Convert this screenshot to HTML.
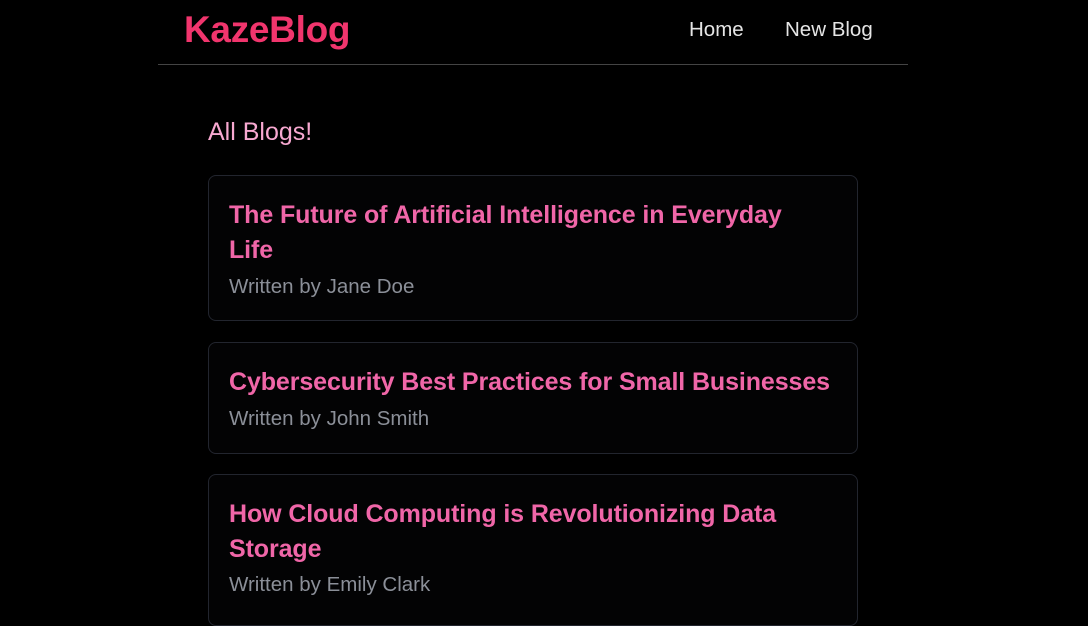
<!DOCTYPE html>
<html><head><style>
body{margin:0;background:#000;font-family:"Liberation Sans",sans-serif;width:1088px;height:605px;overflow:hidden;position:relative}
.hdr{position:absolute;left:158px;top:0;width:750px;height:64px;border-bottom:1px solid #444}
.logo{position:absolute;left:26px;top:9px;font-size:37px;color:#f1356d;font-weight:bold;letter-spacing:-0.3px}
.nav{position:absolute;top:18px;font-size:20.5px;color:#e5e5e5}
h2{position:absolute;left:208px;top:118px;margin:0;font-size:25px;font-weight:normal;color:#f7a8d0}
.card{position:absolute;left:208px;width:608px;padding:0 20px;border:1px solid #22252e;border-radius:8px;background:#030304}
.t{font-size:25px;font-weight:bold;color:#f066a8;line-height:35px;letter-spacing:-0.1px;white-space:nowrap}
.a{font-size:20.5px;color:#8b8f98;line-height:28px;margin-top:5px}
</style></head><body>
<div class="hdr"><div class="logo">KazeBlog</div>
<div class="nav" style="left:531px">Home</div>
<div class="nav" style="left:627px">New Blog</div></div>
<h2>All Blogs!</h2>
<div class="card" style="top:175px;height:144px"><div class="t" style="margin-top:22px">The Future of Artificial Intelligence in Everyday<br>Life</div><div class="a">Written by Jane Doe</div></div>
<div class="card" style="top:342px;height:110px"><div class="t" style="margin-top:22px">Cybersecurity Best Practices for Small Businesses</div><div class="a" style="margin-top:5px">Written by John Smith</div></div>
<div class="card" style="top:474px;height:150px"><div class="t" style="margin-top:22px">How Cloud Computing is Revolutionizing Data<br>Storage</div><div class="a" style="margin-top:4px">Written by Emily Clark</div></div>
</body></html>
